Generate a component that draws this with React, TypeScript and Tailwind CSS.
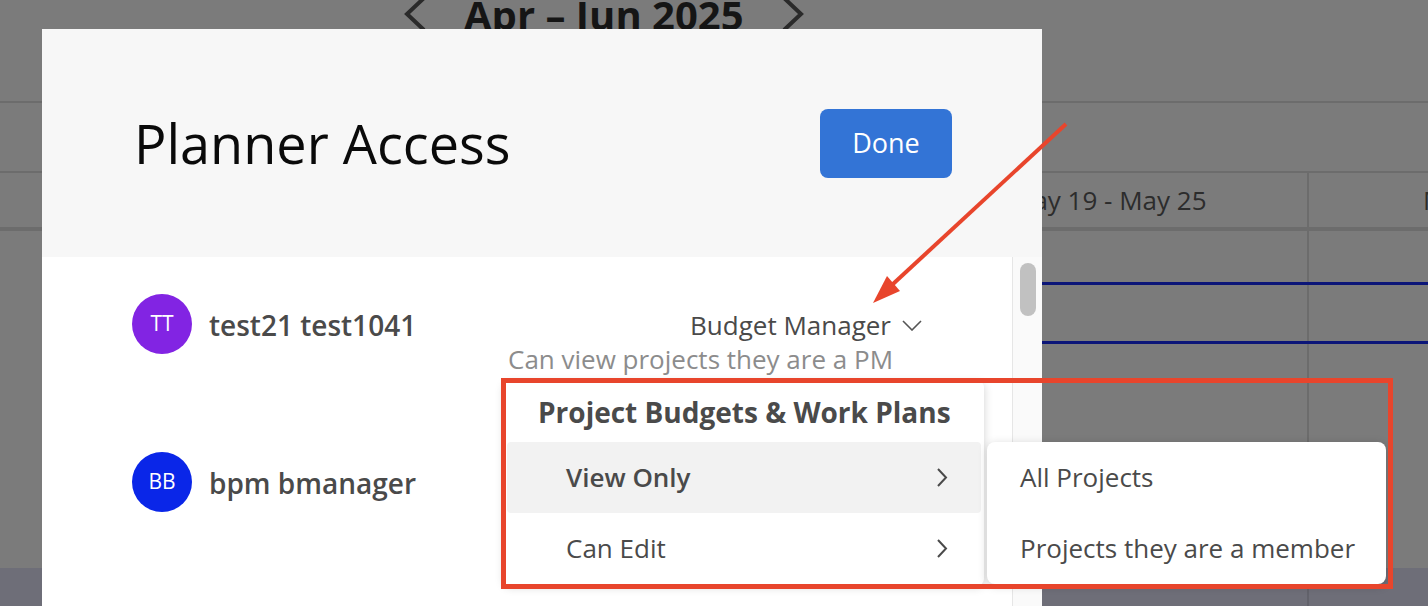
import React from "react";

const people = [
  { initials: "TT", name: "test21 test1041", color: "bg-[#8224e3]" },
  { initials: "BB", name: "bpm bmanager", color: "bg-[#0a26e8]" },
];

function Chevron({ dir, className }: { dir: "right" | "down"; className?: string }) {
  if (dir === "down") {
    return (
      <svg className={className} viewBox="0 0 20 11" fill="none">
        <polyline points="1,1 10,10 19,1" stroke="#555555" strokeWidth="1.6" />
      </svg>
    );
  }
  return (
    <svg className={className} viewBox="0 0 13 19" fill="none">
      <polyline points="2,1 10,9.5 2,18" stroke="currentColor" strokeWidth="2" />
    </svg>
  );
}

function CalendarBackdrop() {
  return (
    <div className="flex flex-col h-full">
      <div className="h-[101px] flex items-start pl-[403px] gap-[38px] text-[#2a2a2a]">
        <svg className="w-[23px] h-[36px] mt-[-4px]" viewBox="0 0 23 36" fill="none">
          <polyline points="21,2 4,18 21,34" stroke="currentColor" strokeWidth="4" />
        </svg>
        <div className="text-[40px] font-bold leading-none mt-[-5px] text-[#151515] whitespace-nowrap">
          Apr – Jun 2025
        </div>
        <svg className="w-[23px] h-[36px] mt-[-4px]" viewBox="0 0 23 36" fill="none">
          <polyline points="2,2 19,18 2,34" stroke="currentColor" strokeWidth="4" />
        </svg>
      </div>
      <div className="h-[2px] bg-[#6c6c6c]" />
      <div className="h-[68px]" />
      <div className="h-[2px] bg-[#6c6c6c]" />
      <div className="h-[54px] grid grid-cols-[898px_411px_1fr] text-[26px] text-[#2c2c2c]">
        <div />
        <div className="border-r-2 border-[#6c6c6c] pl-[112px] flex items-center whitespace-nowrap">May 19 - May 25</div>
        <div className="pl-[114px] flex items-center whitespace-nowrap">May 26 - Jun 1</div>
      </div>
      <div className="h-[4px] bg-[#6c6c6c]" />
      <div className="h-[51px] grid grid-cols-[1309px_1fr]"><div className="border-r-2 border-[#6c6c6c]" /></div>
      <div className="h-[3px] grid grid-cols-[898px_1fr]"><div /><div className="bg-[#0b1578]" /></div>
      <div className="h-[56px] grid grid-cols-[1309px_1fr]"><div className="border-r-2 border-[#6c6c6c]" /></div>
      <div className="h-[3px] grid grid-cols-[898px_1fr]"><div /><div className="bg-[#0b1578]" /></div>
      <div className="flex-1 grid grid-cols-[1309px_1fr]"><div className="border-r-2 border-[#6c6c6c]" /></div>
      <div className="h-[38px] bg-[#6e6e78] grid grid-cols-[1309px_1fr]"><div className="border-r-2 border-[#62626b]" /></div>
    </div>
  );
}

function Avatar({ initials, name, color }: { initials: string; name: string; color: string }) {
  return (
    <div className="flex items-center gap-[17px]">
      <div className={`w-[60px] h-[60px] rounded-full ${color} text-white text-[21px] flex items-center justify-center`}>
        {initials}
      </div>
      <span className="text-[28px] font-semibold text-[#4a4a4a] whitespace-nowrap pt-[2px]">{name}</span>
    </div>
  );
}

function PlannerAccessModal() {
  return (
    <div className="absolute left-[42px] top-[29px] w-[1000px] h-[577px] bg-white flex flex-col">
      <div className="h-[228px] bg-[#f7f7f7] flex items-center justify-between pl-[92px] pr-[90px]">
        <h1 className="text-[54px] text-[#0a0a0a] leading-none">Planner Access</h1>
        <button className="w-[132px] h-[69px] rounded-[8px] bg-[#3374d6] text-white text-[27px]">Done</button>
      </div>
      <div className="flex flex-1 min-h-0">
        <div className="flex-1 pl-[90px] pt-[37px] text-[#4a4a4a]">
          <div className="flex items-center">
            <Avatar {...people[0]} />
            <div className="flex-1" />
            <div className="flex items-center gap-[11px] pr-[90px] pt-[3px] text-[26px]">
              <span>Budget Manager</span>
              <Chevron dir="down" className="w-[20px] h-[11px]" />
            </div>
          </div>
          <div className="pl-[376px] mt-[-8px] text-[26px] leading-[26px] text-[#8c8c8c] whitespace-nowrap">
            Can view projects they are a PM
          </div>
          <div className="flex items-center mt-[80px]">
            <Avatar {...people[1]} />
          </div>
        </div>
        <div className="w-[30px] border-l border-[#e6e6e6] bg-[#fafafa] pt-[6px] pl-[7px]">
          <div className="w-[16px] h-[53px] rounded-full bg-[#c1c1c1]" />
        </div>
      </div>
    </div>
  );
}

function RoleMenu() {
  return (
    <>
      <div className="absolute left-[504px] top-[381px] w-[480px] bg-white rounded-[6px] shadow-[0_2px_10px_rgba(0,0,0,0.18)] px-[3px] pb-[1px] text-[#4a4a4a]">
        <div className="h-[61px] flex items-center pl-[31px] text-[28px] font-bold whitespace-nowrap">
          Project Budgets &amp; Work Plans
        </div>
        <div className="h-[71px] flex items-center justify-between bg-[#f2f2f2] rounded-[4px] pl-[59px] pr-[32px] text-[26px] font-semibold">
          <span>View Only</span>
          <Chevron dir="right" className="w-[13px] h-[19px]" />
        </div>
        <div className="h-[71px] flex items-center justify-between pl-[59px] pr-[32px] text-[26px]">
          <span>Can Edit</span>
          <Chevron dir="right" className="w-[13px] h-[19px]" />
        </div>
      </div>
      <div className="absolute left-[987px] top-[442px] w-[399px] bg-white rounded-[8px] shadow-[0_2px_10px_rgba(0,0,0,0.18)] text-[26px] text-[#4a4a4a]">
        <div className="h-[71px] flex items-center pl-[33px]">All Projects</div>
        <div className="h-[71px] flex items-center pl-[33px] whitespace-nowrap">Projects they are a member</div>
      </div>
    </>
  );
}

function Annotation() {
  return (
    <>
      <div className="absolute left-[501px] top-[378px] w-[892px] h-[211px] border-[5px] border-[#e8452c]" />
      <svg className="absolute left-0 top-0 w-[1428px] h-[606px] pointer-events-none" viewBox="0 0 1428 606">
        <line x1="1066" y1="124" x2="893" y2="284" stroke="#e8452c" strokeWidth="4" />
        <polygon points="873,303 900,291 887,276" fill="#e8452c" />
      </svg>
    </>
  );
}

export default function App() {
  return (
    <div className="relative w-[1428px] h-[606px] overflow-hidden bg-[#7b7b7b] font-['Open_Sans',sans-serif]">
      <CalendarBackdrop />
      <PlannerAccessModal />
      <RoleMenu />
      <Annotation />
    </div>
  );
}
